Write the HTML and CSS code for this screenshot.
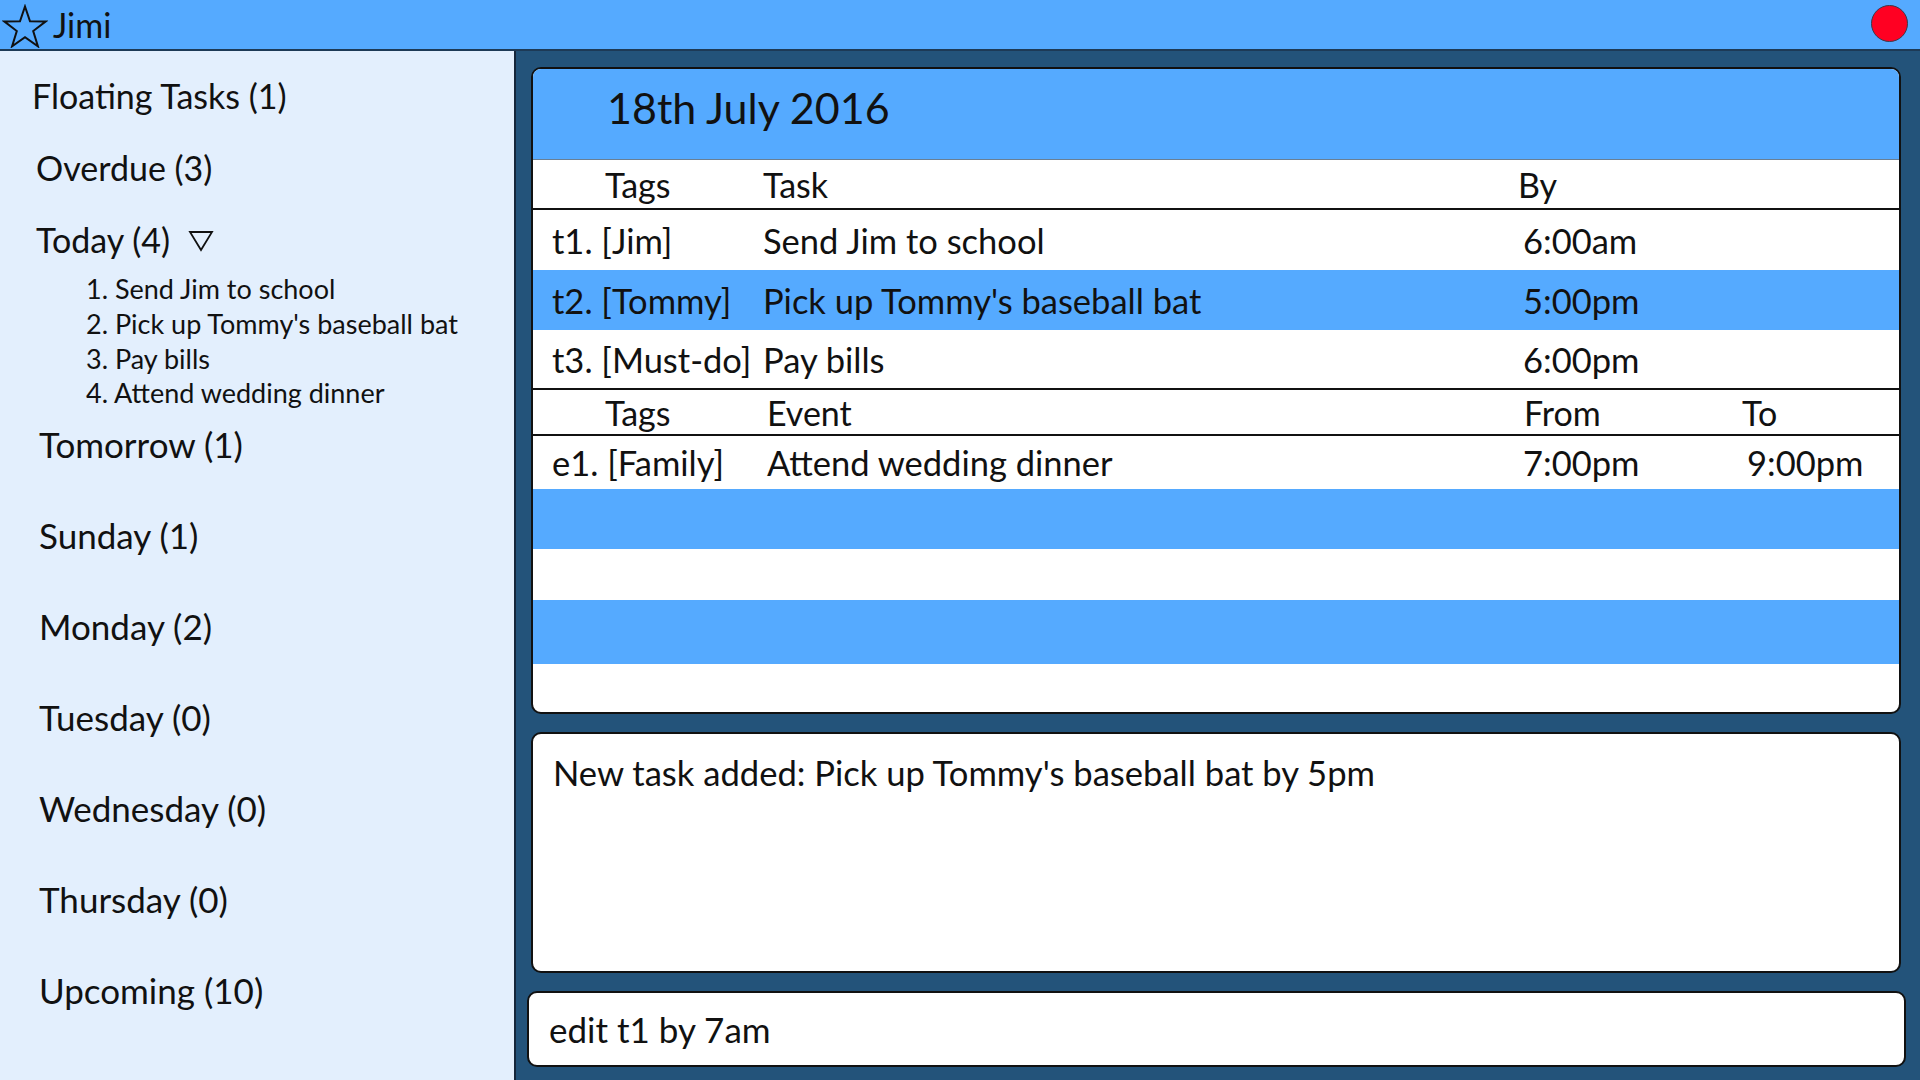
FILE: index.html
```html
<!DOCTYPE html>
<html lang="en">
<head>
<meta charset="utf-8">
<title>Jimi</title>
<link rel="stylesheet" href="styles.css">
</head>
<body>
<div class="app">
  <header class="topbar">
    <div class="brand">
      <svg class="star" width="46" height="44" viewBox="0 0 46 44">
        <polygon points="23,2.5 28,17.2 43.8,17.4 31.2,27 35.9,42.3 23,33.2 10.1,42.3 14.8,27 2.2,17.4 18,17.2" fill="none" stroke="#111" stroke-width="2"/>
      </svg>
      <span class="app-name">Jimi</span>
    </div>
    <span class="close-dot"></span>
  </header>
  <div class="body">
    <aside class="sidebar">
      <div class="nav-item floating">Floating Tasks (1)</div>
      <div class="nav-item">Overdue (3)</div>
      <div class="nav-item today">Today (4)
        <svg class="tri" width="26" height="22" viewBox="0 0 26 22"><polygon points="2,2 24,2 13,20" fill="none" stroke="#111" stroke-width="1.8"/></svg>
      </div>
      <div class="sublist">
        <div class="sub-item">1. Send Jim to school</div>
        <div class="sub-item">2. Pick up Tommy's baseball bat</div>
        <div class="sub-item">3. Pay bills</div>
        <div class="sub-item">4. Attend wedding dinner</div>
      </div>
      <div class="days">
        <div class="day first">Tomorrow (1)</div>
        <div class="day">Sunday (1)</div>
        <div class="day">Monday (2)</div>
        <div class="day">Tuesday (0)</div>
        <div class="day">Wednesday (0)</div>
        <div class="day">Thursday (0)</div>
        <div class="day">Upcoming (10)</div>
      </div>
    </aside>
    <main class="main">
      <section class="card">
        <div class="date-band">18th July 2016</div>
        <div class="row head task-head">
          <div class="c1 hd">Tags</div>
          <div class="c2">Task</div>
          <div class="c3">By</div>
          <div class="c4"></div>
        </div>
        <div class="row item">
          <div class="c1">t1. [Jim]</div>
          <div class="c2">Send Jim to school</div>
          <div class="c3 time">6:00am</div>
          <div class="c4"></div>
        </div>
        <div class="row item alt">
          <div class="c1">t2. [Tommy]</div>
          <div class="c2">Pick up Tommy's baseball bat</div>
          <div class="c3 time">5:00pm</div>
          <div class="c4"></div>
        </div>
        <div class="row item last">
          <div class="c1">t3. [Must-do]</div>
          <div class="c2">Pay bills</div>
          <div class="c3 time">6:00pm</div>
          <div class="c4"></div>
        </div>
        <div class="row head event-head">
          <div class="c1 hd">Tags</div>
          <div class="c2 ev">Event</div>
          <div class="c3 from">From</div>
          <div class="c4">To</div>
        </div>
        <div class="row item event">
          <div class="c1">e1. [Family]</div>
          <div class="c2 ev">Attend wedding dinner</div>
          <div class="c3 time">7:00pm</div>
          <div class="c4 time">9:00pm</div>
        </div>
        <div class="filler blue f1"></div>
        <div class="filler f2"></div>
        <div class="filler blue f3"></div>
        <div class="filler f4"></div>
      </section>
      <section class="message">New task added: Pick up Tommy's baseball bat by 5pm</section>
      <section class="command">edit t1 by 7am</section>
    </main>
  </div>
</div>
</body>
</html>
```

FILE: styles.css
```css
* { box-sizing: border-box; }
html, body { margin: 0; padding: 0; }
body {
  width: 1920px;
  height: 1080px;
  overflow: hidden;
  font-family: Lato, "Liberation Sans", sans-serif;
  color: #111;
  background: #23537a;
}
.app { width: 1920px; height: 1080px; display: flex; flex-direction: column; }

.topbar {
  height: 51px;
  background: #55aaff;
  border-bottom: 2px solid #1d3a56;
  display: flex;
  align-items: center;
  justify-content: space-between;
  padding: 0 12px 0 2px;
}
.brand { display: flex; align-items: center; }
.star { display: block; margin-top: 2px; }
.app-name { font-size: 34px; line-height: 40px; margin-left: 5px; }
.close-dot {
  width: 37px;
  height: 37px;
  border-radius: 50%;
  background: #ff0022;
  border: 1px solid #3a3a4a;
  margin-top: -2px;
}

.body { flex: 1; display: flex; min-height: 0; }

.sidebar {
  width: 516px;
  background: #e3effd;
  border-right: 2px solid #15263a;
  padding-top: 9px;
  font-size: 34px;
}
.nav-item { height: 72px; line-height: 72px; padding-left: 36px; white-space: nowrap; }
.nav-item.floating { padding-left: 32px; }
.today { display: flex; align-items: center; }
.tri { margin-left: 18px; margin-top: 2px; }
.sublist { margin-top: -5px; padding-left: 86px; font-size: 27px; }
.sub-item { height: 35px; line-height: 35px; white-space: nowrap; }
.sub-item:last-child { height: 33px; line-height: 33px; }
.days { display: flex; flex-direction: column; font-size: 35px; margin-top: 3px; }
.day { height: 91px; line-height: 91px; padding-left: 39px; white-space: nowrap; }
.day.first { height: 64px; line-height: 64px; margin-bottom: 14px; }

.main {
  flex: 1;
  display: flex;
  flex-direction: column;
  padding: 16px 19px 13px 15px;
}

.card {
  height: 647px;
  background: #fff;
  border: 2px solid #111;
  border-radius: 10px;
  overflow: hidden;
  display: flex;
  flex-direction: column;
}
.date-band {
  height: 91px;
  flex: none;
  background: #55aaff;
  border-bottom: 1px solid #6a7f93;
  font-size: 43px;
  line-height: 44px;
  padding: 17px 0 0 74px;
}
.row {
  flex: none;
  display: grid;
  grid-template-columns: 211px 755px 224px 1fr;
  padding-left: 19px;
  align-items: center;
  font-size: 34.5px;
  white-space: nowrap;
}
.row.head { font-size: 34px; }
.row .hd { padding-left: 53px; }
.task-head { height: 50px; border-bottom: 2px solid #111; }
.item { height: 60px; }
.item.last { height: 60px; border-bottom: 2px solid #111; }
.event-head { height: 46px; border-bottom: 2px solid #111; }
.item.event { height: 53px; }
.alt { background: #55aaff; }
.time { padding-left: 5px; }
.ev { padding-left: 4px; }
.from { padding-left: 6px; }
.filler { flex: none; }
.filler.blue { background: #55aaff; }
.f1 { height: 60px; }
.f2 { height: 51px; }
.f3 { height: 64px; }
.f4 { flex: 1; }

.message {
  margin-top: 18px;
  height: 241px;
  background: #fff;
  border: 2px solid #111;
  border-radius: 10px;
  font-size: 34.6px;
  line-height: 40px;
  padding: 19px 0 0 20px;
}
.command {
  margin: 18px -5px 0 -4px;
  height: 76px;
  background: #fff;
  border: 2px solid #111;
  border-radius: 10px;
  font-size: 35px;
  display: flex;
  align-items: center;
  padding-left: 20px;
}
```
